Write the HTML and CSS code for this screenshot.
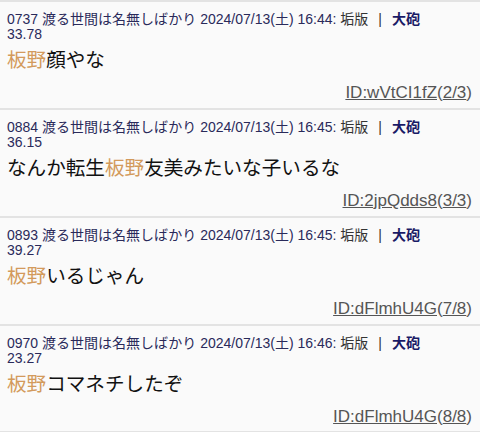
FILE: index.html
```html
<!DOCTYPE html>
<html lang="ja">
<head>
    <meta charset="UTF-8">
    <meta name="viewport" content="width=device-width, initial-scale=1.0">
    <title>レス</title>
    <link rel="stylesheet" href="styles.css">
</head>
<body>
    <div class="thread">
        <div class="post">
            <div class="post-meta">0737 渡る世間は名無しばかり 2024/07/13(土) 16:44: <span class="tag">垢版</span><span class="sep">|</span><span class="cannon">大砲</span><br>33.78</div>
            <div class="post-body"><span class="hl">板野</span>顔やな</div>
            <div class="post-id"><a href="#">ID:wVtCI1fZ</a>(<a href="#">2/3</a>)</div>
        </div>
        <div class="post">
            <div class="post-meta">0884 渡る世間は名無しばかり 2024/07/13(土) 16:45: <span class="tag">垢版</span><span class="sep">|</span><span class="cannon">大砲</span><br>36.15</div>
            <div class="post-body">なんか転生<span class="hl">板野</span>友美みたいな子いるな</div>
            <div class="post-id"><a href="#">ID:2jpQdds8</a>(<a href="#">3/3</a>)</div>
        </div>
        <div class="post">
            <div class="post-meta">0893 渡る世間は名無しばかり 2024/07/13(土) 16:45: <span class="tag">垢版</span><span class="sep">|</span><span class="cannon">大砲</span><br>39.27</div>
            <div class="post-body"><span class="hl">板野</span>いるじゃん</div>
            <div class="post-id"><a href="#">ID:dFlmhU4G</a>(<a href="#">7/8</a>)</div>
        </div>
        <div class="post last">
            <div class="post-meta">0970 渡る世間は名無しばかり 2024/07/13(土) 16:46: <span class="tag">垢版</span><span class="sep">|</span><span class="cannon">大砲</span><br>23.27</div>
            <div class="post-body"><span class="hl">板野</span>コマネチしたぞ</div>
            <div class="post-id"><a href="#">ID:dFlmhU4G</a>(<a href="#">8/8</a>)</div>
        </div>
    </div>
</body>
</html>
```

FILE: styles.css
```css
/* Thread view: 5ch style posts, mobile width */
body {
    margin: 0;
    background-color: #fafafa;
    font-family: 'Liberation Sans', 'Noto Sans CJK JP', sans-serif;
    color: #111;
}

.post {
    height: 108px;
    box-sizing: border-box;
    border-top: 2px solid #e3e3e3;
    padding: 10px 8px 0 7px;
}

.post.last {
    border-bottom: 1px solid #e3e3e3;
}

.post-meta {
    font-size: 14px;
    line-height: 15px;
    color: #2a2a5a;
}

.post-meta .tag {
    color: #333;
}

.post-meta .sep {
    color: #333;
    margin: 0 10px;
}

.post-meta .cannon {
    color: #1a1a66;
    font-weight: 700;
}

.post-body {
    margin-top: 6px;
    font-size: 19.6px;
    line-height: 24px;
    color: #111;
}

.hl {
    color: #d39a5c; /* highlighted keyword */
}

.post-id {
    margin-top: 11px;
    text-align: right;
    font-size: 17px;
    line-height: 20px;
    color: #555;
}

.post-id a {
    color: #555;
    text-decoration: underline;
}
```
